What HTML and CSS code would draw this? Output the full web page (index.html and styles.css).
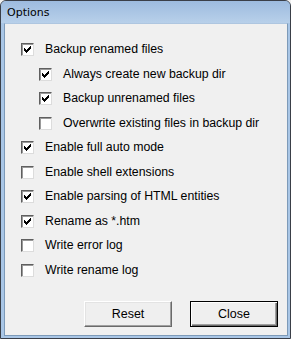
FILE: index.html
```html
<!DOCTYPE html>
<html>
<head>
<meta charset="utf-8">
<link rel="stylesheet" href="styles.css">
</head>
<body>
<div class="window">
  <div class="titlebar"><span class="title">Options</span></div>
  <div class="client">
    <div class="options">
      <div class="row"><span class="cb"><svg class="tick" viewBox="0 0 13 13"><polygon points="3,5 5,7 10,2 10,5 5,10 3,8"/></svg></span><span class="lbl">Backup renamed files</span></div>
      <div class="row sub"><span class="cb"><svg class="tick" viewBox="0 0 13 13"><polygon points="3,5 5,7 10,2 10,5 5,10 3,8"/></svg></span><span class="lbl">Always create new backup dir</span></div>
      <div class="row sub"><span class="cb"><svg class="tick" viewBox="0 0 13 13"><polygon points="3,5 5,7 10,2 10,5 5,10 3,8"/></svg></span><span class="lbl">Backup unrenamed files</span></div>
      <div class="row sub"><span class="cb"></span><span class="lbl">Overwrite existing files in backup dir</span></div>
      <div class="row"><span class="cb"><svg class="tick" viewBox="0 0 13 13"><polygon points="3,5 5,7 10,2 10,5 5,10 3,8"/></svg></span><span class="lbl">Enable full auto mode</span></div>
      <div class="row"><span class="cb"></span><span class="lbl">Enable shell extensions</span></div>
      <div class="row"><span class="cb"><svg class="tick" viewBox="0 0 13 13"><polygon points="3,5 5,7 10,2 10,5 5,10 3,8"/></svg></span><span class="lbl">Enable parsing of HTML entities</span></div>
      <div class="row"><span class="cb"><svg class="tick" viewBox="0 0 13 13"><polygon points="3,5 5,7 10,2 10,5 5,10 3,8"/></svg></span><span class="lbl">Rename as *.htm</span></div>
      <div class="row"><span class="cb"></span><span class="lbl">Write error log</span></div>
      <div class="row"><span class="cb"></span><span class="lbl">Write rename log</span></div>
    </div>
    <div class="buttons">
      <div class="btn">Reset</div>
      <div class="btn default">Close</div>
    </div>
  </div>
</div>
</body>
</html>
```
FILE: styles.css
```css
html, body {
  margin: 0;
  padding: 0;
  background: #f0f0f0;
}
.window {
  width: 291px;
  height: 339px;
  box-sizing: border-box;
  border: 1px solid #3a3f48;
  border-radius: 6px 6px 0 0;
  background: #a9c6e6;
  display: flex;
  flex-direction: column;
  overflow: hidden;
  font-family: "Liberation Sans", Arial, sans-serif;
}
.titlebar {
  height: 22px;
  flex: none;
  background: linear-gradient(#9dbbdf, #b8d0ea);
  display: flex;
  align-items: center;
  padding-left: 6px;
}
.title {
  font-family: "DejaVu Sans", sans-serif;
  font-size: 11px;
  color: #000;
  padding-top: 1px;
}
.client {
  flex: 1;
  margin: 0 2px 2px 3px;
  background: #f0f0f0;
  border: 1px solid #7d9ab8;
  border-top-color: #aec6e0;
  display: flex;
  flex-direction: column;
}
.options {
  padding: 19px 0 0 16px;
  display: flex;
  flex-direction: column;
}
.row {
  height: 24.56px;
  display: flex;
  align-items: flex-start;
  font-size: 12.3px;
  color: #000;
}
.row.sub {
  padding-left: 18px;
}
.cb {
  width: 13px;
  height: 13px;
  box-sizing: border-box;
  background: #fff;
  border: 1px solid;
  border-color: #5f5f5f #dcdcdc #dcdcdc #5f5f5f;
  box-shadow: inset 1px 1px 0 #9a9a9a;
  flex: none;
  position: relative;
}
.tick {
  position: absolute;
  left: -1px;
  top: -1px;
  width: 13px;
  height: 13px;
  fill: #000;
  shape-rendering: crispEdges;
}
.lbl {
  margin-left: 11px;
  line-height: 13px;
  white-space: nowrap;
}
.buttons {
  margin-top: auto;
  display: flex;
  justify-content: flex-end;
  gap: 18px;
  padding: 0 9px 8px 0;
}
.btn {
  width: 88px;
  height: 26px;
  box-sizing: border-box;
  background: #efefef;
  border: 1px solid;
  border-color: #fff #6a6a6a #6a6a6a #fff;
  box-shadow: inset -1px -1px 0 #a0a0a0, inset 1px 1px 0 #e3e3e3;
  display: flex;
  align-items: center;
  justify-content: center;
  font-size: 12.5px;
  color: #000;
}
.btn.default {
  border: 1px solid #000;
  box-shadow: inset 1px 1px 0 #fff, inset -1px -1px 0 #6a6a6a, inset -2px -2px 0 #a0a0a0;
}
```
